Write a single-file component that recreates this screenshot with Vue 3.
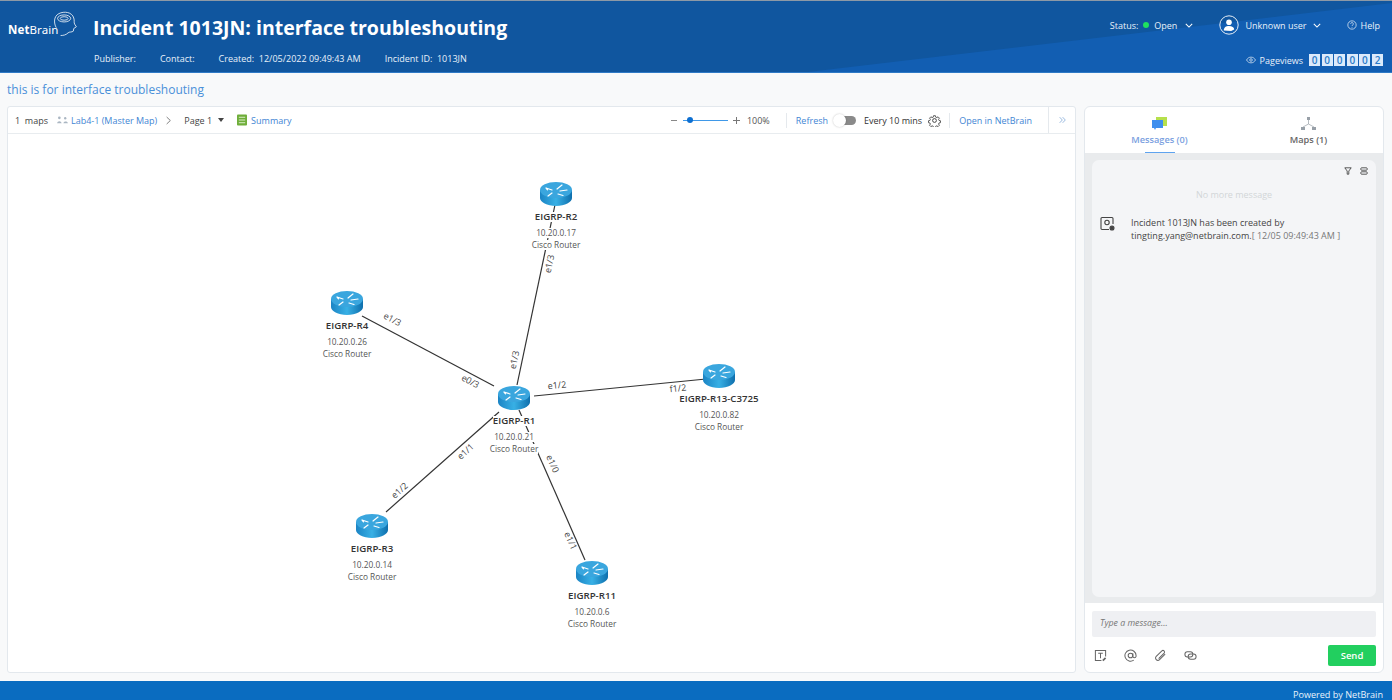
<script setup>
const nodes = [
  { name: 'EIGRP-R2', ip: '10.20.0.17', x: 556, y: 194 },
  { name: 'EIGRP-R4', ip: '10.20.0.26', x: 347, y: 303 },
  { name: 'EIGRP-R1', ip: '10.20.0.21', x: 514, y: 398 },
  { name: 'EIGRP-R13-C3725', ip: '10.20.0.82', x: 719, y: 376 },
  { name: 'EIGRP-R3', ip: '10.20.0.14', x: 372, y: 526 },
  { name: 'EIGRP-R11', ip: '10.20.0.6', x: 592, y: 573 }
]
const links = [
  [556, 200, 517, 385],
  [362, 316, 494, 386],
  [534, 396, 706, 379],
  [386, 512, 499, 412],
  [585, 560, 519, 410]
]
const portLabels = [
  { t: 'e1/3', x: 550, y: 264, r: -78 },
  { t: 'e1/3', x: 515, y: 360, r: -78 },
  { t: 'e1/3', x: 392, y: 320, r: 28 },
  { t: 'e0/3', x: 470, y: 382, r: 28 },
  { t: 'e1/2', x: 557, y: 386, r: -6 },
  { t: 'f1/2', x: 678, y: 389, r: -6 },
  { t: 'e1/1', x: 466, y: 452, r: -42 },
  { t: 'e1/2', x: 400, y: 491, r: -42 },
  { t: 'e1/0', x: 552, y: 464, r: 66 },
  { t: 'e1/1', x: 570, y: 541, r: 66 }
]
const counter = ['0', '0', '0', '0', '0', '2']
const ox = 8
const oy = 134
const nodeStyle = (n) => ({ left: n.x - ox + 'px', top: n.y - oy + 'px' })
</script>

<template>
  <div class="page">
    <header class="hd">
      <svg class="hd-bg" viewBox="0 0 1392 71" preserveAspectRatio="none">
        <polygon points="808,71 1392,2 1392,71" fill="#125eb2" />
      </svg>
      <div class="logo">
        <span class="logo-text"><b>Net</b>Brain</span>
        <svg class="brain" viewBox="0 0 26 32" fill="none" stroke="#fff" stroke-width="0.9">
          <path d="M3 19 C0 14 0 6 6 3 C12 0 21 1 23 8 C24 11 23 13 24 15 L26 18 L23 20 L22.5 23 C21 24.5 18 23.5 16.5 25 C14 27.5 11 28 8 28" />
          <ellipse cx="12" cy="8.5" rx="7.5" ry="4" />
          <ellipse cx="12" cy="8.5" rx="4.5" ry="2" />
        </svg>
      </div>
      <div class="hd-main">
        <h1 class="title">Incident 1013JN: interface troubleshouting</h1>
        <div class="meta">
          <span>Publisher:</span>
          <span>Contact:</span>
          <span>Created:&nbsp; 12/05/2022 09:49:43 AM</span>
          <span>Incident ID:&nbsp; 1013JN</span>
        </div>
      </div>
      <div class="hd-right">
        <div class="hd-top">
          <span class="status">Status: <i class="dot"></i> Open
            <svg class="chev chev-s" viewBox="0 0 10 6"><path d="M1 1l4 4 4-4" /></svg>
          </span>
          <span class="user">
            <svg class="avatar" viewBox="0 0 20 20" fill="none" stroke="#fff">
              <circle cx="10" cy="10" r="9.2" stroke-width="0.9" />
              <circle cx="10" cy="7.2" r="2.8" fill="#fff" stroke="none" />
              <path d="M4.8 15.5c0-3 2.2-4.4 5.2-4.4s5.2 1.4 5.2 3.4l-3 1.4z" fill="#fff" stroke="none" />
            </svg>
            Unknown user
            <svg class="chev" viewBox="0 0 10 6"><path d="M1 1l4 4 4-4" /></svg>
          </span>
          <span class="help">
            <svg class="help-ic" viewBox="0 0 12 12" fill="none" stroke="#fff" stroke-width="0.8">
              <circle cx="6" cy="6" r="5" />
              <path d="M4.4 4.7a1.6 1.6 0 1 1 2.4 1.4c-.6.3-.8.6-.8 1.2M6 8.4v.8" />
            </svg>
            Help
          </span>
        </div>
        <div class="hd-bottom">
          <svg class="eye" viewBox="0 0 14 10" fill="none" stroke="#fff" stroke-width="0.9">
            <path d="M.7 5C2.4 2.2 4.5 1 7 1s4.6 1.2 6.3 4C11.600 7.800 9.500 9 7 9S2.400 7.800.7 5z" />
            <circle cx="7" cy="5" r="1.8" />
          </svg>
          <span class="pv">Pageviews</span>
          <span class="counter">
            <b v-for="(c, i) in counter" :key="i">{{ c }}</b>
          </span>
        </div>
      </div>
    </header>

    <div class="subtitle">this is for interface troubleshouting</div>

    <main class="content">
      <section class="map-card">
        <div class="toolbar">
          <span class="tb-count">1&nbsp; maps</span>
          <svg class="map-ic" viewBox="0 0 12 10" fill="#aab6c2">
            <circle cx="2.5" cy="2" r="1.5" /><circle cx="9" cy="2.5" r="1.3" />
            <path d="M0 8c.3-3 4.700-3 5 0zM7 8c.3-2.600 4.700-2.600 5 0z" />
          </svg>
          <a class="link map-name">Lab4-1 (Master Map)</a>
          <svg class="gt" viewBox="0 0 6 10" fill="none" stroke="#555" stroke-width="0.9"><path d="M.8.8 5.200 5 .8 9.200" /></svg>
          <span class="tb-page">Page 1</span>
          <i class="caret"></i>
          <svg class="sum-ic" viewBox="0 0 11 12">
            <rect width="11" height="12" rx="1" fill="#6fae3a" />
            <path d="M2 3h7M2 6h7M2 9h7" stroke="#e6f3d8" stroke-width="1" />
          </svg>
          <a class="link">Summary</a>
          <span class="spacer"></span>
          <i class="zoom-minus"></i>
          <span class="slider"><i class="knob"></i></span>
          <span class="zoom-plus"></span>
          <span class="zoom-val">100%</span>
          <span class="sep"></span>
          <a class="link">Refresh</a>
          <span class="toggle"><i></i></span>
          <span class="every">Every 10 mins</span>
          <svg class="gear" viewBox="0 0 24 24" fill="none" stroke="#444" stroke-width="1.8">
            <circle cx="12" cy="12" r="3.5" />
            <path d="M10 2h4l.6 3 2.300 1 2.600-1.700 2.800 2.800-1.700 2.600 1 2.300 3 .6v4l-3 .6-1 2.300 1.700 2.600-2.800 2.800-2.600-1.700-2.300 1-.6 3h-4l-.6-3-2.300-1-2.600 1.700-2.800-2.800 1.700-2.600-1-2.300-3-.6v-4l3-.6 1-2.300-1.700-2.600 2.800-2.800 2.600 1.700 2.300-1z" transform="translate(1.400 1.400) scale(.88)" />
          </svg>
          <span class="sep sep-b"></span>
          <a class="link">Open in NetBrain</a>
          <span class="sep sep-c"></span>
          <svg class="dbl" viewBox="0 0 8 8" fill="none" stroke="#7fa8d8" stroke-width="0.9"><path d="M.8.8 3.800 4 .8 7.200M4.200.8 7.200 4 4.200 7.200" /></svg>
        </div>
        <div class="canvas">
          <svg class="wires" width="1068" height="539" viewBox="8 134 1068 539">
            <line v-for="(l, i) in links" :key="i" :x1="l[0]" :y1="l[1]" :x2="l[2]" :y2="l[3]" stroke="#333" stroke-width="1.200" />
            <text v-for="(p, i) in portLabels" :key="'p' + i" :x="p.x" :y="p.y" :transform="`rotate(${p.r} ${p.x} ${p.y})`" class="port" text-anchor="middle" dominant-baseline="middle">{{ p.t }}</text>
          </svg>
          <div v-for="n in nodes" :key="n.name" class="node" :style="nodeStyle(n)">
            <svg class="router" viewBox="0 0 32 24">
              <defs>
                <linearGradient id="rbody" x1="0" x2="1" y1="0" y2="0">
                  <stop offset="0" stop-color="#1b84c4" />
                  <stop offset="0.5" stop-color="#38b0e5" />
                  <stop offset="1" stop-color="#0e6fad" />
                </linearGradient>
              </defs>
              <path d="M0 8v8c0 4 7 8 16 8s16-4 16-8V8z" fill="url(#rbody)" />
              <ellipse cx="16" cy="8" rx="16" ry="8" fill="#3aa6de" />
              <path d="M6 6l6 2M6 6l1.500 1.800M12 11l-4 3M17 7l5-4M20 9l7-1M18 12l5 1.500" stroke="#fff" stroke-width="1.200" fill="none" stroke-linecap="round" />
            </svg>
            <div class="n-name"><span>{{ n.name }}</span></div>
            <div class="n-ip"><span>{{ n.ip }}</span></div>
            <div class="n-type"><span>Cisco Router</span></div>
          </div>
        </div>
      </section>

      <aside class="side">
        <div class="tabs">
          <div class="tab active">
            <svg class="tab-ic" viewBox="0 0 15 14">
              <rect x="4" y="0" width="11" height="9" fill="#b6e04c" />
              <path d="M0 3h11v8H4l-1 2-1-2H0z" fill="#3f8fee" />
            </svg>
            <span>Messages (0)</span>
          </div>
          <div class="tab">
            <svg class="tab-ic" viewBox="0 0 15 14" fill="#98a0a8">
              <rect x="6" y="0" width="3" height="3" />
              <rect x="0" y="10" width="4" height="3" />
              <rect x="11" y="10" width="4" height="3" />
              <path d="M7.5 3v4L2 10M7.5 7l5.500 3" stroke="#98a0a8" stroke-width="0.7" fill="none" />
            </svg>
            <span>Maps (1)</span>
          </div>
        </div>
        <div class="msg-wrap">
          <div class="msg-panel">
            <div class="msg-tools">
              <svg viewBox="0 0 10 10" fill="none" stroke="#333" stroke-width="1"><path d="M1 1h8L6 5v4H4V5z" /></svg>
              <svg viewBox="0 0 10 10" fill="none" stroke="#333" stroke-width="1"><rect x="1" y="1" width="8" height="3" rx="1" /><rect x="1" y="6" width="8" height="3" rx="1" /></svg>
            </div>
            <div class="no-more">No more message</div>
            <div class="msg">
              <svg class="msg-ic" viewBox="0 0 15 15" fill="none" stroke="#444" stroke-width="1.1">
                <path d="M9 13.500H2a1 1 0 0 1-1-1V2.500a1 1 0 0 1 1-1h10a1 1 0 0 1 1 1V8" />
                <circle cx="7" cy="6.5" r="2.2" />
                <circle cx="12" cy="12" r="2" fill="#444" />
              </svg>
              <p>Incident 1013JN has been created by<br />tingting.yang@netbrain.com.<span class="stamp">[ 12/05 09:49:43 AM ]</span></p>
            </div>
          </div>
        </div>
        <div class="composer">
          <div class="input">Type a message...</div>
          <div class="actions">
            <svg viewBox="0 0 14 14" fill="none" stroke="#666" stroke-width="1.1"><path d="M8 12.500H1.500V1.500h11V8" /><path d="M4.500 4.500h5M7 4.500V10" /><path d="M9.500 12.500l3-3" stroke-width="1.8" /></svg>
            <svg viewBox="0 0 14 14" fill="none" stroke="#666" stroke-width="1.1"><circle cx="7" cy="7" r="2.5" /><path d="M9.500 4.500V8a1.800 1.800 0 0 0 3.500 0V7a6 6 0 1 0-2.500 5" /></svg>
            <svg viewBox="0 0 14 14" fill="none" stroke="#666" stroke-width="1.1"><path d="M12 5.500 6 11.500a2.500 2.500 0 0 1-3.600-3.600L8.500 2a1.700 1.700 0 0 1 2.400 2.400L5 10.300" /></svg>
            <svg viewBox="0 0 14 14" fill="none" stroke="#666" stroke-width="1.1"><rect x="1" y="3" width="8.500" height="5.500" rx="2.700" /><rect x="4.500" y="5.500" width="8.500" height="5.500" rx="2.700" /></svg>
            <span class="spacer"></span>
            <button class="send">Send</button>
          </div>
        </div>
      </aside>
    </main>

    <footer class="ft">Powered by NetBrain</footer>
  </div>
</template>

<style>
html, body { margin: 0; background: #f8f9fa; overflow: hidden; }
</style>

<style scoped>
.page { width: 1392px; height: 700px; display: flex; flex-direction: column; font-family: "Open Sans", "Noto Sans", sans-serif; color: #333; background: #f8f9fa; overflow: hidden; }

.hd { position: relative; height: 71px; flex: none; display: flex; background: #10569f; border-top: 1px solid #8d99a6; color: #e9f1fa; font-size: 9px; border-bottom: 1px solid #2f7ac6; box-sizing: content-box; }
.hd-bg { position: absolute; inset: 0; width: 100%; height: 100%; }
.logo { position: relative; width: 94px; flex: none; height: 50px; }
.logo-text { position: absolute; left: 8px; top: 23px; color: #fff; font: 400 11.5px/12px "Noto Sans", sans-serif; letter-spacing: 0.1px; }
.logo-text b { font-weight: 700; }
.brain { position: absolute; left: 53px; top: 10px; width: 24px; height: 28px; }
.hd-main { position: relative; flex: none; }
.title { margin: 13px 0 0 -1px; color: #fff; font-size: 19.5px; line-height: 28px; font-weight: 700; white-space: nowrap; }
.meta { display: flex; gap: 24px; margin-top: 10px; line-height: 14px; font-weight: 500; }
.hd-right { position: relative; margin-left: auto; display: flex; flex-direction: column; align-items: flex-end; padding-right: 12px; }
.hd-top { display: flex; align-items: center; height: 20px; margin-top: 14px; }
.status { display: flex; align-items: center; gap: 5px; }
.dot { width: 6px; height: 6px; border-radius: 50%; background: #1fe05f; }
.chev { width: 8px; height: 5px; fill: none; stroke: #fff; stroke-width: 1.3; }
.chev-s { margin-left: 3px; }
.user { display: flex; align-items: center; gap: 6px; margin-left: 26px; }
.avatar { width: 20px; height: 20px; }
.help { display: flex; align-items: center; gap: 4px; margin-left: 26px; }
.help-ic { width: 10px; height: 10px; }
.hd-bottom { display: flex; align-items: center; margin-top: 16px; height: 18px; margin-right: -3px; }
.eye { width: 10px; height: 8px; margin-right: 4px; }
.pv { margin-right: 6px; }
.counter { display: flex; gap: 1.6px; }
.counter b { width: 11px; height: 12px; background: #dbeafb; color: #2a7bc8; font-size: 10px; line-height: 12px; font-weight: 600; text-align: center; }

.subtitle { flex: none; height: 33px; padding: 0 0 0 7px; box-sizing: border-box; color: #4a90d9; font-size: 12px; line-height: 34px; }

.content { flex: 1; display: flex; gap: 8px; padding: 0 8px 8px 7px; min-height: 0; }
.map-card { width: 1069px; flex: none; background: #fff; border: 1px solid #e3e8ed; border-radius: 3px; box-sizing: border-box; display: flex; flex-direction: column; }
.toolbar { height: 27px; flex: none; display: flex; align-items: center; padding-left: 7px; font-size: 9px; color: #444; border-bottom: 1px solid #e8ecef; box-sizing: border-box; }
.link { color: #3f86d4; }
.tb-count { margin-right: 9px; }
.map-ic { width: 11px; height: 9px; margin-right: 3px; }
.map-name { margin-right: 9px; }
.gt { width: 5px; height: 9px; margin-right: 13px; }
.tb-page { margin-right: 6px; }
.caret { width: 0; height: 0; border-left: 3.5px solid transparent; border-right: 3.5px solid transparent; border-top: 4px solid #444; margin-right: 13px; }
.sum-ic { width: 10px; height: 12px; margin-right: 4px; }
.spacer { flex: 1; }
.zoom-minus { width: 6px; height: 1px; background: #888; margin-right: 6px; }
.slider { position: relative; width: 45px; height: 1px; background: #3f98e8; margin-right: 5px; }
.knob { position: absolute; left: 4px; top: -2.5px; width: 6px; height: 6px; border-radius: 50%; background: #0d6fd1; }
.zoom-plus { position: relative; width: 7px; height: 7px; margin-right: 7px; background: linear-gradient(#777, #777) center / 7px 1px no-repeat, linear-gradient(#777, #777) center / 1px 7px no-repeat; }
.zoom-val { color: #555; }
.sep { width: 1px; height: 15px; background: #e5e9ed; margin: 0 9px 0 16px; }
.toggle { position: relative; width: 22px; height: 9px; background: #8a8a8a; border-radius: 5px; margin: 0 8px 0 6px; }
.toggle i { position: absolute; left: -1px; top: -2px; width: 13px; height: 13px; background: #fff; border-radius: 50%; box-shadow: 0 0 2px rgba(0,0,0,.25); }
.every { color: #333; margin-right: 6px; }
.gear { width: 13px; height: 13px; }
.sep-b { margin: 0 9px 0 8px; }
.sep-c { margin: 0 10px 0 16px; height: 26px; }
.dbl { width: 7px; height: 8px; margin-right: 9px; }

.canvas { position: relative; flex: 1; overflow: hidden; }
.wires { position: absolute; left: 0; top: 0; }
.port { font-size: 9px; fill: #444; font-family: "Open Sans", sans-serif; }
.node { position: absolute; width: 0; display: flex; flex-direction: column; align-items: center; font-size: 8.3px; color: #555; white-space: nowrap; }
.router { flex: none; width: 32px; height: 24px; margin-top: -12px; }
.n-name, .n-ip, .n-type { line-height: 10px; height: 10px; }
.n-name span, .n-ip span, .n-type span { background: #fff; display: inline-block; }
.n-name { margin-top: 6px; font-size: 9.7px; font-weight: 600; color: #333; }
.n-ip { margin-top: 6px; }
.n-type { margin-top: 2px; }

.side { flex: 1; min-width: 0; background: #fff; border: 1px solid #e3e8ed; border-radius: 6px; box-sizing: border-box; display: flex; flex-direction: column; overflow: hidden; }
.tabs { height: 46px; flex: none; display: flex; }
.tab { flex: 1; display: flex; flex-direction: column; align-items: center; font-size: 9.2px; font-weight: 600; color: #666; position: relative; padding-top: 10px; box-sizing: border-box; }
.tab span { margin-top: 2px; line-height: 14px; }
.tab.active { color: #7aa0e0; }
.tab.active::after { content: ""; position: absolute; bottom: 0; left: 50%; width: 30px; height: 1.5px; margin-left: -15px; background: #5ea3ef; }
.tab-ic { width: 15px; height: 14px; }
.msg-wrap { flex: 1; background: #e9ebed; padding: 7px 7px 6px; min-height: 0; display: flex; }
.msg-panel { flex: 1; background: #f4f5f7; border-radius: 7px; position: relative; }
.msg-tools { position: absolute; right: 8px; top: 7px; display: flex; gap: 8px; }
.msg-tools svg { width: 8px; height: 8px; }
.no-more { text-align: center; color: #d2d5d8; font-size: 9px; line-height: 12px; margin-top: 29px; }
.msg { display: flex; margin: 15px 0 0 8px; align-items: flex-start; }
.msg-ic { width: 15px; height: 15px; flex: none; }
.msg p { margin: 0 0 0 16px; font-size: 9px; line-height: 13px; color: #444; }
.stamp { color: #777; }
.composer { flex: none; height: 69px; padding: 8px 7px 0; box-sizing: border-box; }
.input { height: 26px; background: #eff0f3; border-radius: 2px; padding-left: 8px; font-size: 8.8px; line-height: 25px; font-style: italic; color: #777; }
.actions { display: flex; align-items: center; margin-top: 8px; height: 20px; padding-left: 2px; gap: 17px; }
.actions svg { width: 13px; height: 13px; flex: none; }
.send { width: 48px; height: 21px; border: 0; padding: 0; background: #22cf5f; color: #fff; font: 600 9.5px "Open Sans", sans-serif; border-radius: 2px; }

.ft { flex: none; height: 19px; background: #0a6cc0; color: #e9f3fc; font-size: 9.1px; line-height: 28px; text-align: right; padding-right: 9px; box-sizing: border-box; overflow: hidden; }
</style>
